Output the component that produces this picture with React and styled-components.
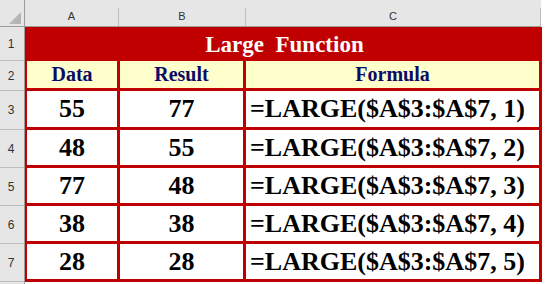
import React from "react";
import styled, { createGlobalStyle } from "styled-components";

const GlobalStyle = createGlobalStyle`
  html, body {
    margin: 0;
    padding: 0;
    background: #fff;
  }
`;

const Sheet = styled.div`
  width: 547px;
  height: 284px;
  overflow: hidden;
  background: #fff;
  font-family: "Liberation Serif", "Times New Roman", serif;
`;

const ColBar = styled.div`
  display: flex;
  width: 541px;
  height: 27px;
  background: #e6e6e6;
  border-bottom: 1px solid #9c9c9c;
  box-sizing: border-box;
`;

const Corner = styled.div`
  width: 25px;
  height: 26px;
  border-right: 1px solid #9c9c9c;
  box-sizing: border-box;
  position: relative;
  svg {
    position: absolute;
    left: 0;
    top: 0;
  }
`;

const ColHead = styled.div`
  width: ${({ w }) => w}px;
  margin-top: 8px;
  border-right: 1px solid #bdbdbd;
  box-sizing: border-box;
  display: flex;
  align-items: center;
  justify-content: center;
  font-family: "Liberation Sans", Arial, sans-serif;
  font-size: 11px;
  color: #333;
  padding-bottom: 2px;
`;

const Body = styled.div`
  display: flex;
`;

const RowHeads = styled.div`
  display: flex;
  flex-direction: column;
  width: 25px;
  height: 257px;
  background: #e6e6e6;
  border-right: 1px solid #9c9c9c;
  box-sizing: border-box;
`;

const RowHead = styled.div`
  height: ${({ h }) => h}px;
  border-bottom: 1px solid #bdbdbd;
  box-sizing: border-box;
  display: flex;
  align-items: center;
  justify-content: center;
  font-family: "Liberation Sans", Arial, sans-serif;
  font-size: 12px;
  color: #333;
  padding-right: 2px;
  flex-shrink: 0;
`;

const Grid = styled.div`
  display: grid;
  grid-template-columns: 93px 126px 296px;
  grid-template-rows: 34px 30px 39px 38px 38px 38px 38px;
  border-left: 2px solid #c00000;
  align-self: flex-start;
`;

const Title = styled.div`
  grid-column: 1 / span 3;
  background: #c00000;
  color: #fff;
  font-size: 23px;
  font-weight: bold;
  white-space: pre;
  display: flex;
  align-items: center;
  justify-content: center;
  padding-top: 1px;
`;

const Cell = styled.div`
  box-sizing: border-box;
  border-right: 3px solid #c00000;
  border-bottom: 3px solid #c00000;
  display: flex;
  align-items: center;
  justify-content: ${({ left }) => (left ? "flex-start" : "center")};
  padding-left: ${({ left }) => (left ? "4px" : "0")};
  background: ${({ head }) => (head ? "#ffffcc" : "#fff")};
  color: ${({ head }) => (head ? "#0a0a6b" : "#000")};
  font-size: ${({ head }) => (head ? "20px" : "26px")};
  font-weight: bold;
  white-space: pre;
`;

const rows = [
  [55, 77, 1],
  [48, 55, 2],
  [77, 48, 3],
  [38, 38, 4],
  [28, 28, 5],
];

const rowHeights = [34, 30, 39, 38, 38, 38, 38];

export default function App() {
  return (
    <Sheet>
      <GlobalStyle />
      <ColBar>
        <Corner>
          <svg width="24" height="26" viewBox="0 0 24 26">
            <polygon points="9,24 21,12 21,24" fill="#b5b5b5" />
          </svg>
        </Corner>
        <ColHead w={94}>A</ColHead>
        <ColHead w={127}>B</ColHead>
        <ColHead w={295}>C</ColHead>
      </ColBar>
      <Body>
        <RowHeads>
          {rowHeights.map((h, i) => (
            <RowHead key={i} h={h}>
              {i + 1}
            </RowHead>
          ))}
          <RowHead h={20} />
        </RowHeads>
        <Grid>
          <Title>{"Large  Function"}</Title>
          <Cell head>Data</Cell>
          <Cell head>Result</Cell>
          <Cell head>Formula</Cell>
          {rows.map(([a, b, k]) => (
            <React.Fragment key={k}>
              <Cell>{a}</Cell>
              <Cell>{b}</Cell>
              <Cell left>{`=LARGE($A$3:$A$7, ${k})`}</Cell>
            </React.Fragment>
          ))}
        </Grid>
      </Body>
    </Sheet>
  );
}
